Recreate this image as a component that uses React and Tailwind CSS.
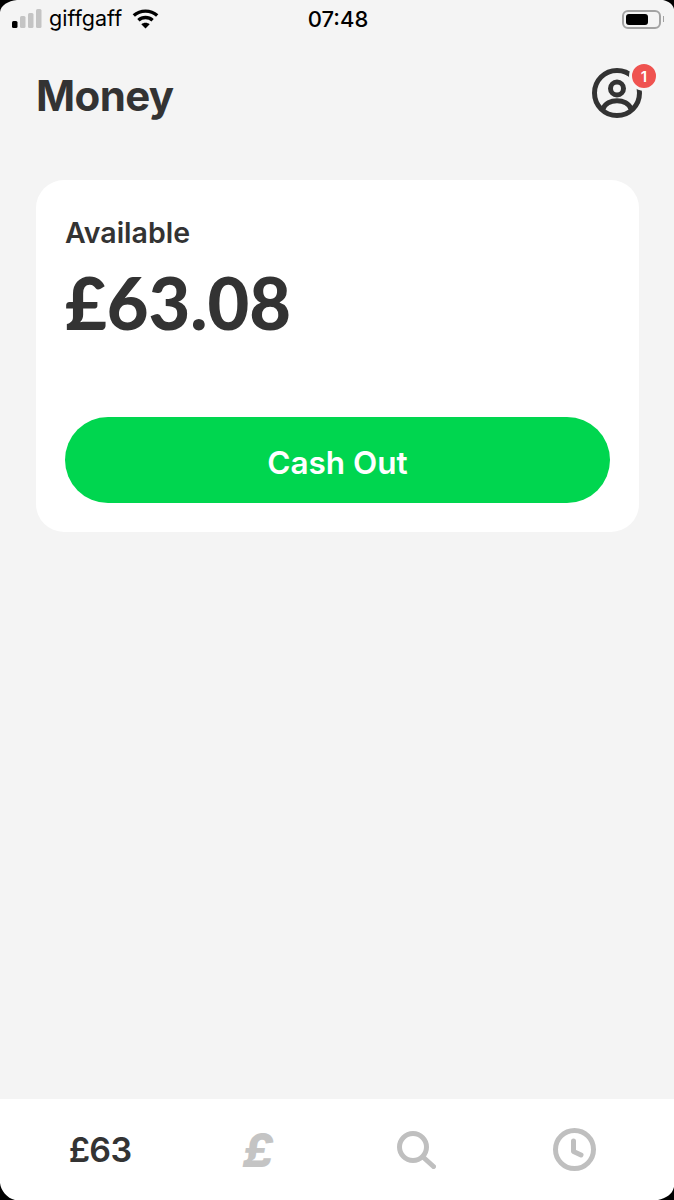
import React from 'react';

const SignalBars = () => (
  <svg width="30" height="20" viewBox="0 0 30 20" className="block">
    <rect x="0" y="12" width="5.5" height="7" rx="1.5" fill="#000" />
    <rect x="8" y="7" width="5.5" height="12" rx="1.5" fill="#c4c4c4" />
    <rect x="16" y="4" width="5.5" height="15" rx="1.5" fill="#c4c4c4" />
    <rect x="24" y="0" width="5.5" height="19" rx="1.5" fill="#c4c4c4" />
  </svg>
);

const Wifi = () => (
  <svg width="27" height="20" viewBox="0 0 27 20" fill="none" stroke="#000" strokeWidth="3.4" className="block">
    <path d="M1.8 6.6C8.4 .6 18.6 .6 25.2 6.6" />
    <path d="M6.4 11.2C10.4 7.6 16.6 7.6 20.6 11.2" />
    <path d="M13.5 19.6 9.3 15.3C11.7 13.3 15.3 13.3 17.7 15.3Z" fill="#000" stroke="none" />
  </svg>
);

const Battery = () => (
  <div className="flex items-center gap-[2px]">
    <div className="w-[39px] h-[19px] rounded-[6px] border-2 border-[#a3a3a3] p-[2px]">
      <div className="w-[22px] h-full rounded-[3px] bg-black" />
    </div>
    <div className="w-[1px] h-[6px] bg-[#a3a3a3]" />
  </div>
);

const Corner = ({ className, d }) => (
  <svg width="24" height="24" viewBox="0 0 24 24" className={`absolute ${className}`}>
    <path d={d} fill="#000" />
  </svg>
);

const ProfileIcon = () => (
  <div className="relative w-[50px] h-[50px]">
    <svg width="50" height="50" viewBox="0 0 50 50" fill="none" stroke="#333" strokeWidth="5" className="block">
      <circle cx="25" cy="25" r="22.5" />
      <circle cx="25" cy="20.5" r="6.5" />
      <path d="M11 41C15 30 35 30 39 41" />
    </svg>
    <div className="absolute -top-[7px] -right-[17px] w-[30px] h-[30px] rounded-full bg-[#ef5350] border-[3px] border-[#f6f6f6] flex items-center justify-center text-white text-[15px] font-semibold leading-none">
      1
    </div>
  </div>
);

const SearchIcon = () => (
  <svg width="39" height="38" viewBox="0 0 39 38" fill="none" stroke="#bfbfbf" strokeWidth="5" strokeLinecap="round" className="block">
    <circle cx="16" cy="16" r="13.5" />
    <path d="M26.5 26.5 36.5 35.5" />
  </svg>
);

const ClockIcon = () => (
  <svg width="43" height="43" viewBox="0 0 43 43" fill="none" stroke="#bfbfbf" strokeWidth="5" strokeLinecap="round" strokeLinejoin="round" className="block">
    <circle cx="21.5" cy="21.5" r="19" />
    <path d="M20.5 13V23.5L28 27" />
  </svg>
);

export default function App() {
  return (
    <div className="relative w-[674px] h-[1200px] flex flex-col overflow-hidden bg-[#f4f4f4] text-[#333333] font-['Inter',sans-serif]">
      <Corner className="top-0 left-0" d="M0 0H17C8 1 1 5 0 12Z" />
      <Corner className="top-0 right-0" d="M24 0H13C18 1 23 4 24 9Z" />
      <Corner className="bottom-0 left-0" d="M0 24H15C7 22 1 15 0 7Z" />
      <Corner className="bottom-0 right-0" d="M24 24H8C16 22 22 19 24 11Z" />

      <div className="grid grid-cols-3 items-center h-[38px] pl-[12px] pr-[10px] text-black">
        <div className="flex items-center">
          <SignalBars />
          <span className="ml-[7px] text-[21.5px] leading-none">giffgaff</span>
          <span className="ml-[10px]"><Wifi /></span>
        </div>
        <div className="text-center text-[22px] font-medium">07:48</div>
        <div className="flex justify-end"><Battery /></div>
      </div>

      <div className="flex items-center justify-between mt-[30px] pl-[36px] pr-[32px] h-[50px]">
        <h1 className="pt-[6px] text-[42px] font-bold leading-none tracking-[-0.015em]">Money</h1>
        <ProfileIcon />
      </div>

      <div className="mt-[62px] ml-[36px] w-[603px] p-[29px] h-[352px] flex flex-col rounded-[28px] bg-white">
        <div className="text-[28.5px] font-semibold leading-none mt-[10px]">Available</div>
        <div className="mt-[18px] font-['Lato',sans-serif] text-[72px] font-black leading-none">£63.08</div>
        <button className="mt-auto h-[86px] pt-[5px] rounded-full bg-[#00d64f] text-white text-[31.5px] font-semibold">
          Cash Out
        </button>
      </div>

      <nav className="mt-auto h-[101px] grid grid-cols-4 items-center bg-white px-[21px]">
        <div className="text-center text-[34px] font-semibold tracking-[-0.02em]">£63</div>
        <div className="text-center text-[47px] font-extrabold italic leading-none text-[#c4c4c4]">£</div>
        <div className="flex justify-center"><SearchIcon /></div>
        <div className="flex justify-center"><ClockIcon /></div>
      </nav>
    </div>
  );
}
